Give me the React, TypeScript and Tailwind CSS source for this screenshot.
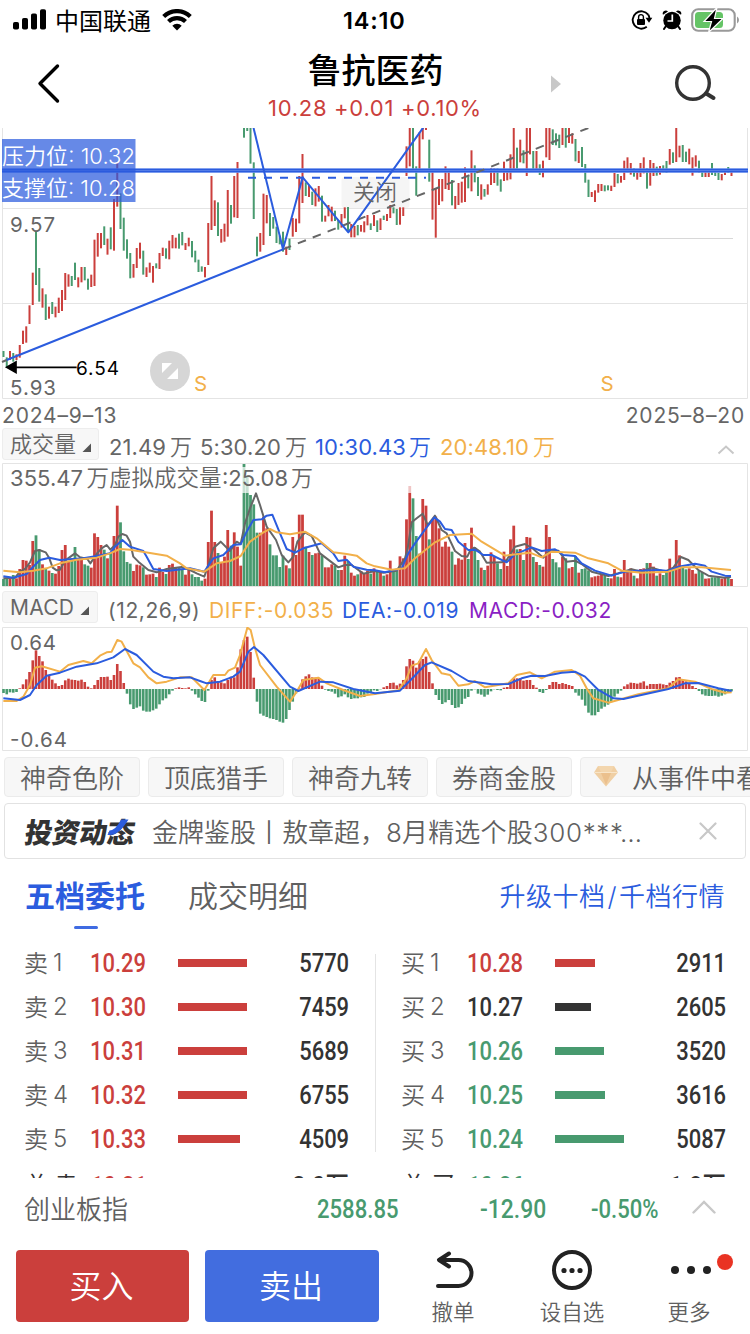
import React from "react";

const SANS = "font-[Inter,'Noto_Sans_CJK_SC',sans-serif]";
const RED = "#cb3f3c";
const GREEN = "#489a6f";
const BLUE = "#2b5cde";
const ORANGE = "#f2b04a";
const GREY = "#666666";

// Direction (r = up, g = down), high and low of each session, in thirds of a pixel.
const SESSIONS = `g678-696 g697-728 r678-705 g684-710 r688-705 r660-698 r617-657 r604-653 r541-597 r443-540
g320-480 g429-530 r490-548 g508-585 r545-581 g531-567 r545-577 r518-564 r495-558 r444-525
r448-485 g453-483 g413-465 r457-487 r426-472 g426-466 g461-494 r449-486 r344-483 r324-395
r324-370 g304-360 r341-389 g307-373 r222-377 r110-245 g205-312 g278-377 g343-401 g384-460
r417-458 r369-429 r353-401 g377-449 r427-456 r413-443 r423-473 g415-430 r384-432 r368-393
g370-401 r347-403 r330-370 r338-370 g326-371 g321-361 r354-375 r338-364 g348-397 g377-412
g404-441 g424-440 r426-457 r294-420 r153-315 r226-303 g232-333 r312-353 r296-350 r195-335
g240-296 r153-277 r111-279 r0-5 g9-38 g9-18 g9-116 g112-282 g335-394 r324-380
r206-360 r210-295 g264-333 g276-311 g305-354 g332-358 g320-380 r365-390 g341-375 r279-335
r281-321 r153-295 r87-234 g172-213 r180-216 g200-240 r190-244 r183-230 g212-290 r272-290
r240-274 r245-289 g257-288 g285-314 r267-308 r247-280 g246-320 r297-337 r303-337 g300-331
r300-320 r289-322 r270-301 g295-315 r270-303 g286-321 r280-315 g272-285 r267-288 r240-279
g247-265 g252-300 r247-299 r247-273 r64-153 r9-124 g9-140 g124-212 r22-137 r9-43
r9-15 g44-170 r138-284 r190-338 r162-240 r162-229 r124-192 r135-195 g165-241 r213-252
r174-240 r170-233 r127-231 g154-190 r76-199 g121-172 g156-213 r178-224 g192-215 r178-209
r129-180 r130-174 g130-182 g163-200 r110-168 r137-166 r88-163 r9-137 g68-131 r44-112
g76-115 r9-153 r9-88 g78-132 r78-132 g118-150 r107-157 r9-97 r9-105 g13-60
g25-61 g29-69 r9-60 g9-68 r9-54 r25-56 g42-109 r78-114 g66-126 g117-173
g164-216 r201-216 r196-231 r177-203 r177-198 g181-199 g181-196 r182-198 r144-186 g147-175
r153-173 r107-165 r97-142 r114-149 g130-155 r141-164 r114-156 r97-145 g130-191 r105-182
r114-153 g125-152 r123-149 g121-142 g108-144 r72-119 g82-114 r9-111 r62-97 g60-111
g80-111 r71-118 r97-152 r91-125 g107-143 g135-156 r135-156 r135-156 g114-150 g138-153
g142-165 r147-166 r133-150 g126-144 r133-153`
  .split(/\s+/)
  .map((s) => {
    const [top, bottom] = s.slice(1).split("-").map(Number);
    return { color: s[0] === "r" ? RED : GREEN, top, bottom };
  });

const nums = (s: string) => s.split(/\s+/).map(Number);

const VOLUME = nums(`462 462 462 450 460 432 405 407 420 348 331 373 418 430 437 444 446 423 375 360
408 400 366 402 402 418 422 428 325 336 360 374 400 383 333 242 292 379 411 416
438 419 421 427 449 448 446 456 428 441 447 420 416 427 426 432 449 430 448 456
456 467 461 351 257 351 384 412 395 315 362 322 365 422 117 152 210 238 323 323
275 310 358 391 391 426 392 421 430 336 390 269 269 365 381 390 385 383 391 427
427 418 422 435 435 392 408 443 452 448 438 444 437 446 430 440 440 452 448 407
437 437 394 400 283 183 220 333 386 222 242 343 282 275 310 365 350 365 380 419
400 404 354 402 308 367 405 428 435 422 382 395 415 432 380 423 343 302 373 372
405 336 338 396 411 420 425 300 336 402 412 427 395 400 430 426 393 443 432 430
436 457 454 452 446 453 459 460 432 455 457 405 438 430 452 460 432 430 414 414
425 452 445 450 441 401 430 345 391 427 433 430 435 446 437 441 461 460 457 457
456 461 456 456 462`);

const MACD = nums(`804 808 802 803 801 790 778 763 741 706 676 693 709 735 752 764 775 783 780 766
761 764 765 767 764 771 785 790 780 765 756 756 755 765 750 717 738 774 806 838
852 848 844 857 860 860 856 851 838 826 820 808 797 790 787 789 790 787 797 808
818 828 831 797 765 757 769 772 775 765 755 757 727 673 645 635 681 758 830 866
872 876 880 882 885 890 893 882 855 830 805 790 763 754 748 757 758 762 782 794
798 800 806 817 814 808 817 822 820 820 817 816 806 801 796 798 793 787 783 774
773 781 776 765 724 702 707 728 708 702 695 741 775 810 825 837 832 825 840 849
847 837 821 816 797 793 806 809 815 809 799 793 795 796 788 786 770 760 760 760
767 765 765 780 788 801 804 795 780 771 771 777 774 777 780 783 803 812 824 842
863 871 871 861 851 845 839 830 815 806 797 784 778 773 774 776 773 769 782 777
777 777 776 778 780 773 768 757 756 763 769 774 783 789 798 808 812 813 813 812
815 812 808 803 799`);

const MA5 =
  "10,460 45,458 60,440 75,432 90,412 105,378 118,375 137,382 148,400 158,428 170,436 180,434 195,407 225,385 240,397 262,402 271,415 283,397 293,383 305,370 320,360 331,374 345,360 355,335 367,327 380,332 390,350 400,395 415,410 445,435 470,442 500,432 545,426 570,435 590,445 613,455 625,420 640,370 662,350 690,378 710,350 722,357 735,295 750,250 768,205 780,240 800,305 828,345 845,390 865,412 880,395 892,350 915,322 935,333 960,385 1015,427 1035,420 1055,420 1090,446 1125,438 1150,443 1190,437 1215,400 1223,370 1235,292 1250,280 1268,266 1283,300 1305,272 1325,315 1340,325 1365,378 1385,393 1402,395 1410,378 1423,368 1440,380 1460,413 1505,412 1520,405 1545,365 1575,357 1600,372 1630,398 1650,375 1675,377 1700,410 1725,407 1745,417 1775,440 1825,453 1855,445 1895,433 1925,440 1955,428 1995,440 2020,428 2043,396 2065,405 2095,435 2125,452 2175,458 2193,455";
const MA10 =
  "10,454 40,458 80,447 100,425 120,405 148,398 180,405 210,403 250,400 290,393 330,385 345,365 367,345 390,365 430,378 440,395 460,432 500,438 545,433 570,430 613,440 640,400 670,390 700,360 722,358 740,320 760,285 785,283 800,272 817,269 840,325 860,372 885,383 910,370 965,355 1000,385 1015,408 1040,404 1060,425 1100,434 1125,436 1155,442 1205,430 1225,385 1245,355 1280,307 1303,277 1320,290 1335,312 1355,315 1375,350 1405,375 1425,374 1450,390 1475,390 1520,412 1545,388 1595,367 1625,378 1665,373 1690,390 1725,393 1745,415 1785,437 1835,452 1875,440 1915,437 1975,435 2005,438 2035,425 2085,416 2115,422 2135,440 2175,452 2193,453";
const MA20 =
  "10,437 60,442 100,437 140,430 180,415 230,404 290,398 330,385 360,372 390,374 450,384 500,392 540,415 560,430 613,440 650,415 690,408 722,393 750,350 790,322 810,312 830,322 870,328 915,320 950,340 1000,382 1040,387 1070,392 1100,415 1125,424 1175,434 1215,430 1245,400 1305,352 1350,330 1415,326 1445,350 1515,392 1555,387 1590,383 1625,397 1655,380 1725,383 1765,400 1825,415 1865,437 1925,443 2005,440 2045,427 2105,427 2193,435";
const DIFF =
  "10,828 50,828 70,815 90,780 105,728 125,724 180,740 205,720 250,708 275,715 300,692 320,682 335,680 352,645 365,650 380,678 400,715 420,727 445,757 470,775 500,770 540,757 575,757 613,795 640,750 675,750 685,737 705,728 720,690 742,608 752,615 765,670 780,720 830,785 870,830 890,800 910,765 955,758 980,775 1030,795 1080,813 1125,807 1195,796 1220,760 1235,722 1255,715 1278,672 1295,705 1325,745 1350,750 1375,782 1405,778 1425,768 1455,787 1525,775 1550,750 1590,742 1625,760 1665,740 1715,735 1740,752 1760,790 1780,820 1825,833 1865,822 1915,808 2005,790 2035,763 2085,770 2135,792 2175,803 2195,802";
const DEA =
  "10,820 60,825 90,810 110,780 140,752 180,743 230,725 290,715 340,697 375,672 410,690 460,740 490,755 520,760 570,757 600,768 620,775 660,770 700,755 720,740 745,680 762,666 790,690 870,785 895,798 960,770 1000,772 1060,792 1125,805 1200,797 1235,762 1275,720 1295,712 1355,738 1405,768 1475,778 1525,777 1565,760 1595,752 1635,753 1685,743 1725,740 1755,755 1795,795 1840,820 1870,822 2005,792 2055,775 2095,774 2155,790 2195,798";

const barX = (i: number) => 10.5 + i * 9.75;

function Line({ points, color, dash }: { points: string; color: string; dash?: string }) {
  return <polyline points={points} fill="none" stroke={color} strokeWidth="6" strokeDasharray={dash} strokeLinejoin="round" />;
}

function StatusBar() {
  return (
    <div className="flex h-10 shrink-0 items-center pl-[13px] pr-[10px]">
      <div className="flex w-[330px] items-center">
        <svg width="34" height="22" viewBox="0 0 34 22">
          <rect x="0" y="13" width="6" height="7.500" rx="1.800" />
          <rect x="9" y="9" width="6" height="11.500" rx="1.800" />
          <rect x="18" y="4.500" width="6" height="16" rx="1.800" />
          <rect x="27" y="0.300" width="6" height="20.200" rx="1.800" />
        </svg>
        <span className="ml-[8px] mt-[3px] text-2xl leading-none">中国联通</span>
        <svg className="ml-[11px]" width="30" height="22" viewBox="0 0 30 22">
          <path d="M15 21.500 10.300 16.700a6.700 6.700 0 0 1 9.400 0Z" />
          <path d="M6.500 12.500a12.200 12.200 0 0 1 17 0M1.700 7.500a19 19 0 0 1 26.600 0" fill="none" stroke="#000" strokeWidth="4.200" />
        </svg>
      </div>
      <span className="mt-[2px] text-[23.5px] font-semibold leading-none tracking-[0.800px]">14:10</span>
      <div className="ml-auto flex items-center">
        <svg width="22" height="20" viewBox="0 0 22 20">
          <path d="M17.200 4.600A8.700 8.700 0 1 0 15.800 16.800" fill="none" stroke="#000" strokeWidth="1.900" />
          <path d="M14.500 7.700h6.800l-3.300 5Z" />
          <path d="M17.200 4.600a8.700 8.700 0 0 1 1.300 4" fill="none" stroke="#000" strokeWidth="1.900" />
          <rect x="6" y="9" width="8" height="6" rx="1" />
          <path d="M7.600 9V7a2.400 2.400 0 0 1 4.800 0v2" fill="none" stroke="#000" strokeWidth="1.400" />
        </svg>
        <svg className="ml-[9px]" width="20" height="20" viewBox="0 0 20 20">
          <circle cx="10" cy="10.500" r="8.700" />
          <path d="M1 4.800A3 3 0 0 1 6 1.600ZM19 4.800A3 3 0 0 0 14 1.600Z" />
          <path d="m4 16-2 3M16 16l2 3" stroke="#000" strokeWidth="2" strokeLinecap="round" />
          <path d="M10.300 4.500v6.500H5.500" stroke="#fff" strokeWidth="1.700" fill="none" />
        </svg>
        <svg className="ml-[9px]" width="49" height="26" viewBox="0 0 49 26">
          <rect x="1.200" y="2.200" width="42.500" height="21.600" rx="6" fill="none" stroke="#999" strokeWidth="2.100" />
          <path d="M46 9.500v7q2-1 2-3.500t-2-3.500Z" fill="#999" />
          <rect x="4" y="5" width="28" height="16" rx="3.500" fill="#65c466" />
          <path d="M26 0.500 13 14.500h7.500L17.500 25.500 32 11.500h-8.500Z" stroke="#fff" strokeWidth="1.200" />
        </svg>
      </div>
    </div>
  );
}

function Header() {
  return (
    <header className="flex h-[88px] shrink-0 items-start">
      <svg className="ml-[36px] mt-[23px]" width="26" height="42" viewBox="0 0 26 42">
        <path d="M21.500 3 4 20.500 21.500 38" fill="none" stroke="#000" strokeWidth="3.400" strokeLinecap="round" strokeLinejoin="round" />
      </svg>
      <div className="ml-[206px] mt-[12px] flex w-[214px] flex-col items-center">
        <h1 className="pl-[1px] text-[34px] font-medium leading-[38px]">鲁抗医药</h1>
        <p className="mt-[7px] whitespace-nowrap text-[22px] leading-[22px] tracking-[0.700px] text-[#cb3f3c]">10.28 +0.01 +0.10%</p>
      </div>
      <svg className="ml-[69px] mt-[35px]" width="10" height="18" viewBox="0 0 10 18">
        <path d="M0 0.500v17L10 9Z" fill="#c8c8c8" />
      </svg>
      <svg className="ml-[113px] mt-[24px]" width="44" height="40" viewBox="0 0 44 40">
        <circle cx="19" cy="19" r="16.300" fill="none" stroke="#333" strokeWidth="3.400" />
        <path d="m33 30 6.500 4" stroke="#333" strokeWidth="4" strokeLinecap="round" />
      </svg>
    </header>
  );
}

function PriceChart() {
  return (
    <svg className="block shrink-0" width="750" height="272" viewBox="0 128 750 272" fontFamily="Inter, 'Noto Sans CJK SC', sans-serif">
      <path d="M2.500 128V398.500H747.500V128M2.500 208.500H747.500M2.500 303.500H747.500" fill="none" stroke="#e4e4e4" />
      <path d="M284 238.500H733" stroke="#d8d8d8" />
      <rect x="341.500" y="177" width="68" height="31" rx="3" fill="#f5f5f5" />
      <g transform="translate(0 125) scale(0.33333)">
        {SESSIONS.map((s, i) => (
          <rect key={i} x={barX(i) - 3} y={s.top} width="6" height={s.bottom - s.top} fill={s.color} />
        ))}
      </g>
      <rect x="2" y="168.300" width="746" height="4.500" fill="#7d9df0" />
      <path d="M2 169.500H748M2 171.500H748" stroke={BLUE} strokeWidth="1.300" />
      <g transform="translate(0 125) scale(0.33333)">
        <Line points="744,158 1278,158" color={BLUE} dash="24 24" />
        <Line points="849,373 1765,9" color={GREY} dash="26 22" />
        <Line points="6,711 20,705" color={GREY} />
        <Line points="20,705 849,373 908,157 1045,322 1271,6" color={BLUE} />
        <Line points="760,6 849,373" color={BLUE} />
        <path d="M20 727 48 711V743Z M40 727H230" stroke="#000" strokeWidth="5" />
      </g>
      <text x="353" y="200" fontSize="22" fill={GREY} className="font-[350]">关闭</text>
      <rect x="2" y="139" width="133.500" height="63" fill="#2b5cde" fillOpacity="0.720" />
      <g fontSize="22" fill="#fff" className="font-[350]">
        <text x="2" y="163.500" textLength="133">压力位: 10.32</text>
        <text x="2" y="195.500" textLength="133">支撑位: 10.28</text>
      </g>
      <g fontSize="20.500" fill={GREY}>
        <text x="10" y="231.800" textLength="45">9.57</text>
        <text x="10" y="394.800" textLength="46">5.93</text>
      </g>
      <text x="76" y="374.800" fontSize="19" textLength="43">6.54</text>
      <circle cx="170" cy="371" r="20" fill="#d6d6d6" />
      <path d="M162 363H172L162 373ZM178 368V379H167Z" fill="#fff" />
      <g fontSize="20.500" fill={ORANGE}>
        <text x="194" y="391">S</text>
        <text x="600.500" y="391">S</text>
      </g>
    </svg>
  );
}

function Selector({ label, className }: { label: string; className: string }) {
  return (
    <div className={`flex shrink-0 items-center whitespace-nowrap rounded-[3px] border border-[#ededed] bg-[#f7f7f7] pl-[7px] text-[#666] ${className}`}>
      <span className="leading-none">{label}</span>
      <svg className="ml-[6px] mt-[7px]" width="10" height="10" viewBox="0 0 10 10">
        <path d="M9 0.500V9H0.500Z" fill="#555" />
      </svg>
    </div>
  );
}

function VolumePanel() {
  return (
    <section className="shrink-0">
      <div className="flex h-[35px] items-start pl-[2px]">
        <Selector label="成交量" className="h-[32px] w-[97px] text-[22px] font-[350]" />
        <div className="ml-[10px] mt-[7px] flex whitespace-nowrap text-[22px] leading-[24px] tracking-[0.100px] text-[#666]">
          <span className="w-[91px]">21.49<i className="ml-[4px] font-[350] not-italic">万</i></span>
          <span className="w-[115px]">5:30.20<i className="ml-[4px] font-[350] not-italic">万</i></span>
          <span className="w-[125px] text-[#2b5cde]">10:30.43<i className="ml-[3px] font-[350] not-italic">万</i></span>
          <span className="text-[#f2b04a]">20:48.10<i className="ml-[4px] font-[350] not-italic">万</i></span>
        </div>
        <svg className="ml-auto mr-[15px] mt-[16px]" width="18" height="12" viewBox="0 0 18 12">
          <path d="m1.500 9.500 7.500-7 7.500 7" fill="none" stroke="#c8c8c8" strokeWidth="2" />
        </svg>
      </div>
      <svg className="block" width="750" height="125" viewBox="0 463 750 125" fontFamily="Inter, 'Noto Sans CJK SC', sans-serif">
        <path d="M2.500 463.500H747.500V586.500H2.500Z" fill="none" stroke="#e4e4e4" />
        <g transform="translate(0 425) scale(0.33333)">
          {VOLUME.map((v, i) => (
            <rect key={i} x={barX(i) - 4.200} y={v} width="8.400" height={483 - v} fill={SESSIONS[i].color} />
          ))}
          <rect x="12" y="126" width="2225" height="78" fill="#fff" fillOpacity="0.700" />
          <Line points={MA5} color={GREY} />
          <Line points={MA10} color={BLUE} />
          <Line points={MA20} color={ORANGE} />
        </g>
        <text y="486" fontSize="22" fill={GREY}>
          <tspan x="10" textLength="73">355.47</tspan>
          <tspan x="86.500" fontSize="22.500" className="font-[350]">万虚拟成交量</tspan>
          <tspan x="222" textLength="66">:25.08</tspan>
          <tspan x="291" className="font-[350]">万</tspan>
        </text>
      </svg>
    </section>
  );
}

function MacdPanel() {
  return (
    <section className="shrink-0">
      <div className="flex h-[39px] items-start pl-[2px]">
        <Selector label="MACD" className="mt-[3px] h-[32px] w-[96px] text-[21px] tracking-[0.2px]" />
        <div className="ml-[10px] mt-[11px] flex whitespace-nowrap text-[21px] leading-[24px] tracking-[0.600px] text-[#666]">
          <span className="w-[101px]">(12,26,9)</span>
          <span className="w-[133px] text-[#f2b04a]">DIFF:-0.035</span>
          <span className="w-[127px] text-[#2b5cde]">DEA:-0.019</span>
          <span className="text-[#8a1fc4]">MACD:-0.032</span>
        </div>
      </div>
      <svg className="block" width="750" height="125" viewBox="0 627 750 125" fontFamily="Inter, 'Noto Sans CJK SC', sans-serif">
        <path d="M2.500 627.500H747.500V750.500H2.500Z" fill="none" stroke="#e4e4e4" />
        <g transform="translate(0 425) scale(0.33333)">
          {MACD.map((v, i) => (
            <rect key={i} x={barX(i) - 3.900} y={Math.min(v, 792)} width="7.800" height={Math.abs(792 - v)} fill={v < 792 ? RED : GREEN} />
          ))}
          <Line points={DIFF} color={ORANGE} />
          <Line points={DEA} color={BLUE} />
        </g>
        <g fontSize="20.500" fill={GREY}>
          <text x="10" y="649.800" textLength="46">0.64</text>
          <text x="10" y="746.800" textLength="57">-0.64</text>
        </g>
      </svg>
    </section>
  );
}

function Chips() {
  return (
    <div className="mt-[5px] flex h-10 shrink-0 gap-2 overflow-hidden pl-1 text-[26px] font-[350] leading-none text-[#606060]">
      {["神奇色阶", "顶底猎手", "神奇九转", "券商金股"].map((label) => (
        <span key={label} className="flex w-[136px] shrink-0 items-center justify-center rounded-[4px] border border-[#ebebeb] bg-[#f7f7f7] pt-[3px]">
          {label}
        </span>
      ))}
      <span className="flex w-[200px] shrink-0 items-center whitespace-nowrap rounded-[4px] border border-[#ebebeb] bg-[#f7f7f7] pl-[13px] pt-[3px]">
        <svg className="mb-[5px] mr-[14px]" width="24" height="22" viewBox="0 0 24 22">
          <path d="M4 1h16l4 6.500L12 21.500 0 7.500Z" fill="#f0cfa3" />
          <path d="M4 1h16l-3 6H7Z" fill="#f3d6ae" />
          <path d="M7 8h10l-5 12Z" fill="#ebc08d" />
          <path d="M0.500 7.500h23" stroke="#f8e5c9" strokeWidth="1" />
        </svg>
        从事件中看
      </span>
    </div>
  );
}

function News() {
  return (
    <div className="mx-[4px] mt-[6px] flex h-[56px] shrink-0 items-center rounded-[4px] border border-[#e2e2e2] text-[26px] text-[#606060]">
      <div className="relative ml-[20px] mt-[3px] w-[112px] whitespace-nowrap text-[28px] font-black leading-none text-[#333]">
        <span className="inline-block origin-left -skew-x-[9deg] scale-x-[0.980]">投资动态</span>
        <svg className="absolute left-[82px] top-0" width="28" height="18" viewBox="0 0 28 18">
          <path d="M14 0.500h7.500Q12 16 3 16H0.500l2-4.500Q9 11 14 0.500Z" fill={BLUE} />
        </svg>
      </div>
      <span className="ml-[15px] mt-[3px] whitespace-nowrap font-[350] leading-none">
        金牌鉴股丨敖章超，<span className="tracking-[0.150px]">8月精选个股</span><span className="tracking-[0.650px]">300***…</span>
      </span>
      <svg className="ml-auto mr-[28px]" width="18" height="18" viewBox="0 0 18 18">
        <path d="m1.500 1.500 15 15m0-15-15 15" stroke="#c8c8c8" strokeWidth="2.200" strokeLinecap="round" />
      </svg>
    </div>
  );
}

type Level = { side: string; n: string; price: string; color: string; bar: string; qty: string };
const R = "text-[#cb3f3c]";
const G = "text-[#489a6f]";
const K = "text-[#333]";
const SELL: Level[] = [
  { side: "卖", n: "1", price: "10.29", color: R, bar: "w-[69px]", qty: "5770" },
  { side: "卖", n: "2", price: "10.30", color: R, bar: "w-[69px]", qty: "7459" },
  { side: "卖", n: "3", price: "10.31", color: R, bar: "w-[69px]", qty: "5689" },
  { side: "卖", n: "4", price: "10.32", color: R, bar: "w-[69px]", qty: "6755" },
  { side: "卖", n: "5", price: "10.33", color: R, bar: "w-[62px]", qty: "4509" },
];
const BUY: Level[] = [
  { side: "买", n: "1", price: "10.28", color: R, bar: "w-[40px]", qty: "2911" },
  { side: "买", n: "2", price: "10.27", color: K, bar: "w-[36px]", qty: "2605" },
  { side: "买", n: "3", price: "10.26", color: G, bar: "w-[49px]", qty: "3520" },
  { side: "买", n: "4", price: "10.25", color: G, bar: "w-[50px]", qty: "3616" },
  { side: "买", n: "5", price: "10.24", color: G, bar: "w-[69px]", qty: "5087" },
];

function Book({ levels, total, totalPrice, totalQty, totalColor }: { levels: Level[]; total: string; totalPrice: string; totalQty: string; totalColor: string }) {
  return (
    <div className="w-[324px] shrink-0">
      {levels.map((l) => (
        <div key={l.n} className="flex h-[44px] items-center leading-none">
          <span className="-ml-px flex w-[66px] shrink-0 items-center gap-[5px] text-[24px] font-[350] text-[#606060]">
            <span className="mt-[1px]">{l.side}</span>
            <span>{l.n}</span>
          </span>
          <span className={`w-[88px] shrink-0 origin-left scale-x-[0.845] font-[Roboto,sans-serif] text-[26px] font-medium ${l.color}`}>{l.price}</span>
          <span className={`h-2 shrink-0 bg-current ${l.bar} ${l.color}`} />
          <span className="ml-auto origin-right scale-x-[0.845] font-[Roboto,sans-serif] text-[26px] font-medium text-[#333]">{l.qty}</span>
        </div>
      ))}
      <div className="flex h-[49px] items-center leading-none">
        <span className="w-[66px] shrink-0 whitespace-nowrap text-[23px] text-[#333]">{total}</span>
        <span className={`origin-left scale-x-[0.845] font-[Roboto,sans-serif] text-[26px] font-medium ${totalColor}`}>{totalPrice}</span>
        <span className="ml-auto origin-right scale-x-[0.900] font-[Roboto,'Noto_Sans_CJK_SC',sans-serif] text-[26px] font-medium text-[#333]">{totalQty}</span>
      </div>
    </div>
  );
}

function OrderBook() {
  return (
    <section className="flex h-[319px] shrink-0 flex-col overflow-hidden">
      <div className="flex h-[82px] shrink-0 items-start pl-[25px] pr-[25px]">
        <div className="flex flex-col items-center">
          <span className="mt-[20px] text-[30px] font-bold leading-[34px] text-[#2b5cde]">五档委托</span>
          <span className="ml-[2px] mt-[13px] h-[3px] w-6 rounded-full bg-[#3f6be2]" />
        </div>
        <span className="ml-[43px] mt-[20px] text-[30px] font-[350] leading-[34px] text-[#606060]">成交明细</span>
        <span className="ml-auto mt-[23px] text-[26px] font-[350] leading-[30px] tracking-[0.500px] text-[#2b5cde]">升级十档<span className="mx-[2px]">/</span>千档行情</span>
      </div>
      <div className="flex pl-[25px]">
        <Book levels={SELL} total="总 卖" totalPrice="10.31" totalQty="3.0万" totalColor={R} />
        <span className="ml-[26px] mr-[26px] mt-[13px] h-[198px] w-px shrink-0 bg-[#e4e4e4]" />
        <Book levels={BUY} total="总 买" totalPrice="10.26" totalQty="1.8万" totalColor={G} />
      </div>
    </section>
  );
}

function IndexRow() {
  return (
    <div className="flex h-[62px] shrink-0 items-center pl-[24px] font-[Roboto,sans-serif] text-[26px] font-medium leading-none text-[#489a6f]">
      <span className={`mt-[2px] w-[293px] shrink-0 font-[350] text-[#606060] ${SANS}`}>创业板指</span>
      <span className="w-[163px] shrink-0 origin-left scale-x-[0.850]">2588.85</span>
      <span className="w-[111px] shrink-0 origin-left scale-x-[0.880]">-12.90</span>
      <span className="w-[101px] shrink-0 origin-left scale-x-[0.850]">-0.50%</span>
      <svg className="-mt-[5px]" width="24" height="14" viewBox="0 0 24 14">
        <path d="M1.500 12.500 12 2l10.500 10.500" fill="none" stroke="#c8c8c8" strokeWidth="2.400" strokeLinecap="round" />
      </svg>
    </div>
  );
}

function ActionBar() {
  return (
    <div className="flex flex-1 items-start pl-4 pt-[10px]">
      <button className="h-[72px] w-[173px] rounded-[4px] bg-[#cb3f3c] pr-[2px] pt-[2px] text-[32px] font-[350] leading-none text-white">买入</button>
      <button className="ml-4 h-[72px] w-[174px] rounded-[4px] bg-[#426ddf] pr-[2px] pt-[2px] text-[32px] font-[350] leading-none text-white">卖出</button>
      <div className="flex flex-1 text-[21.5px] font-[350] leading-none text-[#606060]">
        <div className="ml-[52px] flex w-[44px] flex-col items-center whitespace-nowrap">
          <svg className="ml-[4px] h-10 w-10" viewBox="0 0 40 40">
            <path d="M3 36h20.500a13 13 0 0 0 0-26H4M14 3.500 4 10l10 6.500" fill="none" stroke="#222" strokeWidth="4" strokeLinecap="round" strokeLinejoin="round" />
          </svg>
          <span className="mt-[12px]">撤单</span>
        </div>
        <div className="ml-[64px] flex w-[66px] flex-col items-center whitespace-nowrap">
          <svg className="h-10 w-10" viewBox="0 0 40 40">
            <circle cx="20" cy="20" r="18" fill="none" stroke="#222" strokeWidth="4" />
            <g fill="#222">
              <circle cx="12" cy="20.500" r="2.600" />
              <circle cx="20" cy="20.500" r="2.600" />
              <circle cx="28" cy="20.500" r="2.600" />
            </g>
          </svg>
          <span className="mt-[12px]">设自选</span>
        </div>
        <div className="relative ml-[62px] flex w-[44px] flex-col items-center whitespace-nowrap">
          <svg className="ml-[1px] h-10 w-11" viewBox="0 0 44 40" fill="#222">
            <circle cx="7" cy="20" r="4" />
            <circle cx="23" cy="20" r="4" />
            <circle cx="39" cy="20" r="4" />
          </svg>
          <span className="mt-[12px]">更多</span>
          <span className="absolute -right-[22px] top-[4px] size-4 rounded-full bg-[#e93323]" />
        </div>
      </div>
    </div>
  );
}

export default function App() {
  return (
    <main className={`flex h-[1334px] w-[750px] flex-col overflow-hidden bg-white text-black ${SANS}`}>
      <StatusBar />
      <Header />
      <PriceChart />
      <div className="flex h-[28px] shrink-0 items-center justify-between pl-[2px] pr-[5px] pt-[2px] text-[21px] leading-none tracking-[0.850px] text-[#666]">
        <span>2024–9–13</span>
        <span>2025–8–20</span>
      </div>
      <VolumePanel />
      <MacdPanel />
      <Chips />
      <News />
      <OrderBook />
      <IndexRow />
      <ActionBar />
    </main>
  );
}
